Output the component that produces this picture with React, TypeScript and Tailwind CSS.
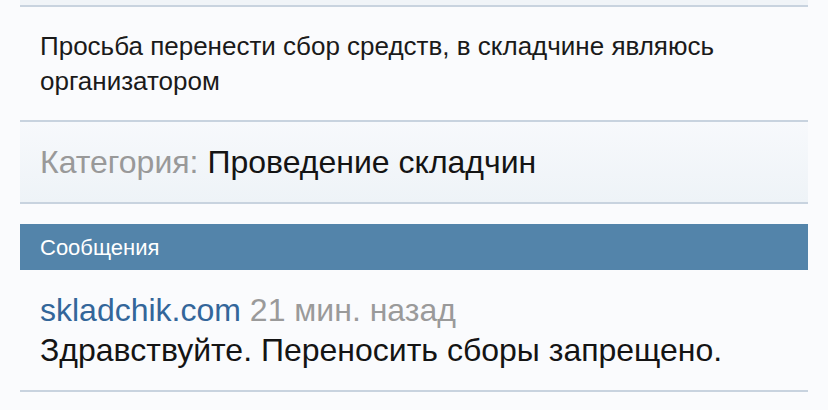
import React from "react";

export default function App() {
  return (
    <div
      className="w-[828px] h-[410px] overflow-hidden bg-[#fafbfd] px-[20px]"
      style={{ fontFamily: '"Liberation Sans", Arial, sans-serif' }}
    >
      <div className="h-[5px] bg-[#f0f4f8]" />
      <div className="border-t-2 border-[#c8d3df] pt-[22px] pb-[21px] pl-[20px] text-[26px] leading-[35px] text-[#1a1a1a]">
        Просьба перенести сбор средств, в складчине являюсь
        <br />
        организатором
      </div>
      <div className="border-y-2 border-[#c8d3df] bg-gradient-to-b from-[#f7f9fc] to-[#eef3f7] h-[84px] flex items-center pl-[20px] text-[32px]">
        <span className="text-[#999999]">Категория:</span>
        <span className="text-[#141414] ml-[9px]">Проведение складчин</span>
      </div>
      <div className="mt-[20px] h-[46px] bg-[#5384aa] flex items-center pl-[20px] text-[22px] text-white">
        Сообщения
      </div>
      <div className="pl-[20px] pt-[20px] pb-[20px] border-b-2 border-[#c8d3df]">
        <div className="text-[32px] leading-[40px] whitespace-nowrap">
          <span className="text-[#33669a]">skladchik.com</span>{" "}
          <span className="text-[#9a9a9a]">21 мин. назад</span>
        </div>
        <div className="text-[32px] leading-[40px] text-[#141414] whitespace-nowrap">
          Здравствуйте. Переносить сборы запрещено.
        </div>
      </div>
    </div>
  );
}
